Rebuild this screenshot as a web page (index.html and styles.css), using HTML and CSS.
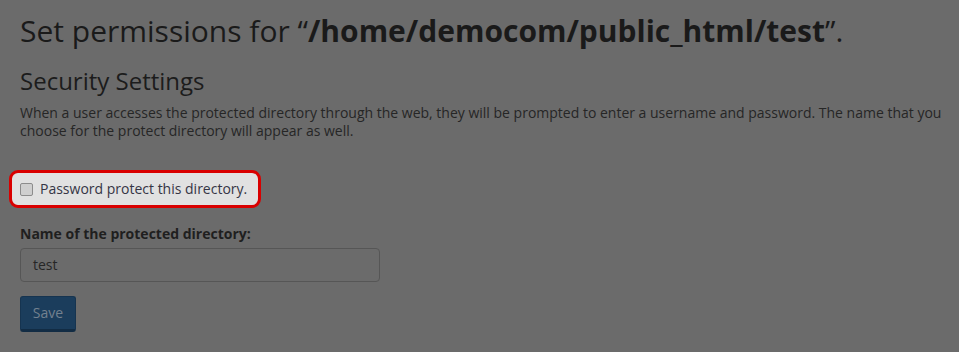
FILE: index.html
```html
<!DOCTYPE html>
<html lang="en">
<head>
<meta charset="utf-8">
<title>Set permissions</title>
<link rel="stylesheet" href="styles.css">
</head>
<body>
<main class="page">
  <h1 class="title">Set permissions for “<strong>/home/democom/public_html/test</strong>”.</h1>
  <h2 class="subtitle">Security Settings</h2>
  <p class="desc">When a user accesses the protected directory through the web, they will be prompted to enter a username and password. The name that you choose for the protect directory will appear as well.</p>
  <div class="highlight">
    <label class="check">
      <span class="box"></span>
      <span class="check-text">Password protect this directory.</span>
    </label>
  </div>
  <label class="field-label" for="dirname">Name of the protected directory:</label>
  <div class="input">test</div>
  <button class="btn" type="button">Save</button>
</main>
</body>
</html>
```
FILE: styles.css
```css
html, body {
  margin: 0;
  padding: 0;
  background: #6b6b6b;
}
body {
  font-family: "Open Sans", "DejaVu Sans", sans-serif;
  color: #262626;
  width: 959px;
  height: 352px;
  overflow: hidden;
}
.page {
  padding: 14px 20px 0 20px;
  display: flex;
  flex-direction: column;
  align-items: flex-start;
}
.title {
  margin: 0;
  font-size: 30px;
  line-height: 33px;
  font-weight: 400;
  color: #1a1a1a;
  white-space: nowrap;
}
.title strong {
  font-weight: 700;
}
.subtitle {
  margin: 20.5px 0 0 0;
  font-size: 24px;
  line-height: 26.4px;
  font-weight: 400;
  color: #1c1c1c;
}
.desc {
  margin: 10px 0 0 0;
  width: 922px;
  font-size: 14px;
  line-height: 18.2px;
  color: #262626;
}
.highlight {
  margin: 30px 0 0 -11px;
  background: #e1e1e1;
  border: 3px solid #d90000;
  border-radius: 9px;
  padding: 6px 11px 6px 8px;
  display: inline-flex;
  align-items: center;
}
.check {
  display: flex;
  align-items: center;
  gap: 7px;
  font-size: 14px;
  line-height: 20px;
  color: #353545;
}
.box {
  width: 11px;
  height: 11px;
  border: 1px solid #8c8c8c;
  border-radius: 2px;
  background: #cfcfcf;
}
.field-label {
  margin-top: 15.5px;
  font-size: 14px;
  line-height: 20px;
  font-weight: 700;
  color: #1f1f1f;
}
.input {
  margin-top: 4.5px;
  box-sizing: border-box;
  width: 360px;
  height: 34px;
  border: 1px solid #565656;
  border-radius: 4px;
  padding: 0 12px;
  font-size: 14px;
  line-height: 32px;
  color: #262626;
}
.btn {
  margin-top: 14px;
  box-sizing: border-box;
  width: 56px;
  height: 36px;
  border: 1px solid #163450;
  border-bottom: 3px solid #122c44;
  border-radius: 3px;
  background: #1b3d5c;
  color: #73818f;
  font-family: "Open Sans", "DejaVu Sans", sans-serif;
  font-size: 14px;
  line-height: 20px;
  padding: 0;
}
```
